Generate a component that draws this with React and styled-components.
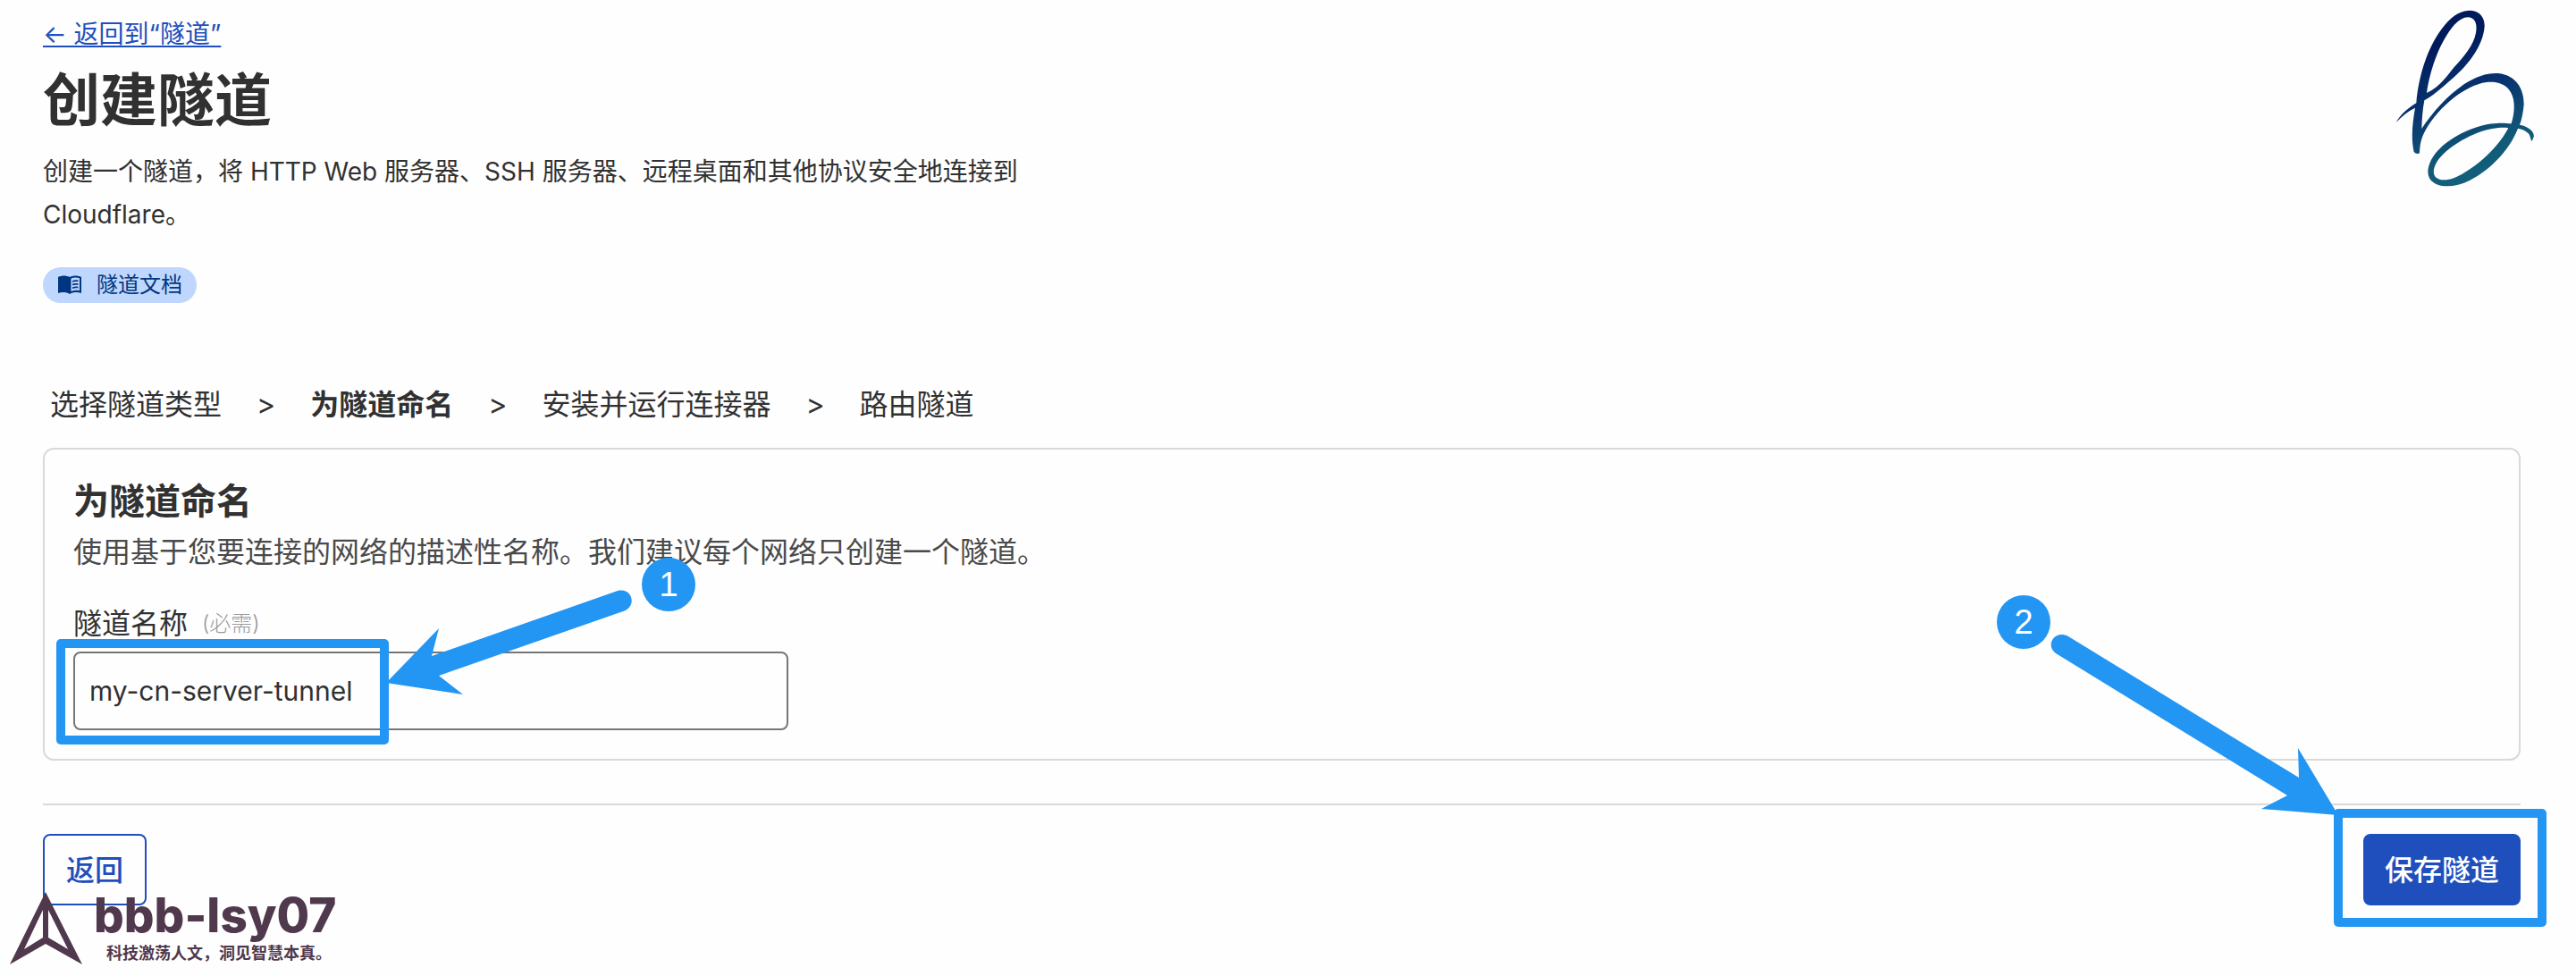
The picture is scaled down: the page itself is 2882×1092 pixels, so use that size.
import React from "react";
import styled, { createGlobalStyle } from "styled-components";

const color = {
  blue: "#1f4fbc",
  mark: "#2396f4",
  text: "#313131",
  muted: "#4a4a4a",
  line: "#d9d9d9",
  plum: "#50384d",
};

const GlobalStyle = createGlobalStyle`
  *, *::before, *::after { box-sizing: border-box; }
  body { margin: 0; background: #fefefe; }
  body, button, input {
    font-family: Inter, "Noto Sans CJK SC", sans-serif;
  }
  h1, h2, p, ol { margin: 0; padding: 0; }
`;

const Page = styled.div`
  position: relative;
  min-height: 100vh;
  padding: 18px 62px 79px 48px;
  color: ${color.text};
  font-size: 32px;
  line-height: 48px;
`;

const BackLink = styled.a`
  display: block;
  width: max-content;
  font-size: 28px;
  line-height: 40px;
  color: ${color.blue};
  text-decoration: underline;
  text-decoration-thickness: 2px;
  text-underline-offset: 3px;
`;

const Title = styled.h1`
  margin-top: 14px;
  font-size: 64px;
  line-height: 80px;
  font-weight: 600;
`;

const Intro = styled.p`
  max-width: 1100px;
  margin-top: 16px;
  font-size: 28px;
`;

const DocsLink = styled.a`
  display: flex;
  align-items: center;
  gap: 16px;
  width: max-content;
  height: 40px;
  margin-top: 35px;
  padding: 0 16px;
  border-radius: 20px;
  background: #bfd6fd;
  color: #003681;
  font-size: 24px;
  text-decoration: none;
`;

const Steps = styled.ol`
  display: flex;
  gap: 39px;
  margin-top: 90px;
  padding-left: 8px;
  list-style: none;
`;

const Step = styled.li`
  display: flex;
  gap: 39px;
  font-weight: ${(p) => (p.$current ? 600 : 400)};

  &:not(:first-child)::before {
    content: ">";
    font-weight: 400;
  }
`;

const Card = styled.section`
  margin-top: 24px;
  padding: 34px 32px 32px;
  border: 2px solid ${color.line};
  border-radius: 12px;
`;

const CardTitle = styled.h2`
  font-size: 40px;
  line-height: 48px;
  font-weight: 600;
`;

const CardText = styled.p`
  margin-top: 9px;
  color: ${color.muted};
`;

const FieldLabel = styled.label`
  display: flex;
  align-items: center;
  gap: 16px;
  margin-top: 32px;
`;

const Required = styled.span`
  font-size: 24px;
  font-weight: 300;
  color: #999;
`;

const Field = styled.div`
  position: relative;
  width: 100%;
  max-width: 800px;
  margin-top: 7px;
`;

const TextInput = styled.input`
  display: block;
  width: 100%;
  height: 88px;
  padding: 0 16px;
  border: 2px solid #767676;
  border-radius: 8px;
  background: transparent;
  color: ${color.text};
  font-size: 30px;
  outline: none;
`;

const Actions = styled.footer`
  display: flex;
  justify-content: space-between;
  margin-top: 48px;
  padding-top: 32px;
  border-top: 2px solid ${color.line};
`;

const ActionSlot = styled.div`
  position: relative;
`;

const Button = styled.button`
  display: block;
  height: 80px;
  padding: 0 ${(p) => (p.$primary ? 22 : 24)}px 4px;
  border: 2px solid ${color.blue};
  border-radius: 8px;
  background: ${(p) => (p.$primary ? color.blue : "transparent")};
  color: ${(p) => (p.$primary ? "#fff" : color.blue)};
  font-size: 32px;
  font-weight: 500;
`;

const Highlight = styled.div`
  position: absolute;
  border: 10px solid ${color.mark};
  border-radius: 5px;
  pointer-events: none;
`;

const NameHighlight = styled(Highlight)`
  top: -14px;
  left: -19px;
  width: 372px;
  height: 118px;
`;

const SaveHighlight = styled(Highlight)`
  top: -28px;
  left: -33px;
  width: 238px;
  height: 132px;
`;

const Arrow = styled.svg`
  position: absolute;
  overflow: visible;
  fill: ${color.mark};
  pointer-events: none;
`;

const NameArrow = styled(Arrow)`
  left: 350px;
  top: -69px;
`;

const SaveArrow = styled(Arrow)`
  left: -348px;
  top: -223px;
`;

const Marker = styled.span`
  position: absolute;
  display: grid;
  place-items: center;
  width: 60px;
  height: 60px;
  border-radius: 50%;
  background: ${color.mark};
  color: #fff;
  font-family: "Liberation Sans", Arial, sans-serif;
  font-size: 38px;
`;

const NameMarker = styled(Marker)`
  left: 636px;
  top: -105px;
`;

const SaveMarker = styled(Marker)`
  left: -410px;
  top: -267px;
`;

const ScriptLogo = styled.svg`
  position: absolute;
  top: 0;
  right: 0;
`;

const Watermark = styled.div`
  position: absolute;
  left: 11px;
  bottom: 12px;
  display: flex;
  align-items: flex-end;
  gap: 12px;
  color: ${color.plum};
  pointer-events: none;
`;

const WatermarkName = styled.div`
  font-size: 53px;
  line-height: 60px;
  font-weight: 800;
`;

const WatermarkMotto = styled.div`
  padding-left: 14px;
  font-size: 18px;
  line-height: 26px;
  font-weight: 700;
`;

const STEPS = ["选择隧道类型", "为隧道命名", "安装并运行连接器", "路由隧道"];

function BookIcon() {
  return (
    <svg width="28" height="22" viewBox="0 0 28 22" aria-hidden="true">
      <path
        fill="currentColor"
        fillRule="evenodd"
        d="M1 2C5 0 10 0 14 2C18 0 23 0 27 2V20C23 18.500 18 18.500 14 21C10 18.500 5 18.500 1 20ZM15.500 3.500V18C18.500 16.800 22 16.500 25 17.300V3.300C22 2.300 18.500 2.300 15.500 3.500ZM17 6C19.500 5.200 21.500 5.200 23.500 5.600V7.300C21.500 6.900 19.500 6.900 17 7.700ZM17 9.600C19.500 8.800 21.500 8.800 23.500 9.200V10.900C21.500 10.500 19.500 10.500 17 11.300ZM17 13.200C19.500 12.400 21.500 12.400 23.500 12.800V14.500C21.500 14.100 19.500 14.100 17 14.900Z"
      />
    </svg>
  );
}

function Logo() {
  return (
    <ScriptLogo width="242" height="230" viewBox="0 0 726 690" aria-hidden="true">
      <defs>
        <linearGradient id="ink" gradientUnits="userSpaceOnUse" x1="250" y1="150" x2="420" y2="600">
          <stop offset="0" stopColor="#001a5c" />
          <stop offset="0.400" stopColor="#08346f" />
          <stop offset="0.800" stopColor="#115a78" />
          <stop offset="1" stopColor="#14607c" />
        </linearGradient>
      </defs>
      <path
        fill="url(#ink)"
        fillRule="evenodd"
        d="M201 514Q190 519 182 510C171 460 178 410 186 362C163 372 143 389 122 411C137 385 160 364 190 346C197 255 230 150 285 85C315 47 345 35 372 35C402 37 420 58 419 88C415 150 370 213 310 265C272 299 240 325 217 337C211 370 209 400 208 432C245 377 290 325 350 283C395 254 430 244 465 246C527 253 552 300 551 352C548 380 544 402 537 419C570 425 588 445 584 460L578 474C573 470 574 455 565 447C555 437 545 434 531 431C505 500 440 570 370 605C330 625 290 630 262 620C228 607 223 578 235 548C262 480 360 430 430 417C465 411 490 413 509 415C520 380 520 350 515 330C505 288 470 271 425 276C355 286 268 355 222 435C206 463 202 485 201 514ZM225 312C272 290 300 245 318 224C350 190 383 150 390 110C395 80 388 61 366 58C350 57 332 65 308 95C265 150 235 240 225 312ZM499 430C482 427 460 429 430 435C370 450 290 495 258 545C243 572 245 595 268 602C290 608 320 600 352 579C415 542 470 485 499 430Z"
      />
    </ScriptLogo>
  );
}

export default function App() {
  return (
    <Page>
      <GlobalStyle />
      <Logo />
      <BackLink href="#tunnels">← 返回到“隧道”</BackLink>
      <Title>创建隧道</Title>
      <Intro>
        创建一个隧道，将 HTTP Web 服务器、SSH 服务器、远程桌面和其他协议安全地连接到 Cloudflare。
      </Intro>
      <DocsLink href="#docs">
        <BookIcon />
        隧道文档
      </DocsLink>

      <Steps>
        {STEPS.map((name, i) => (
          <Step key={name} $current={i === 1}>
            {name}
          </Step>
        ))}
      </Steps>

      <Card>
        <CardTitle>为隧道命名</CardTitle>
        <CardText>使用基于您要连接的网络的描述性名称。我们建议每个网络只创建一个隧道。</CardText>
        <FieldLabel htmlFor="tunnel-name">
          隧道名称 <Required>(必需)</Required>
        </FieldLabel>
        <Field>
          <TextInput id="tunnel-name" type="text" defaultValue="my-cn-server-tunnel" />
          <NameHighlight />
          <NameArrow width="272" height="118" viewBox="0 0 272 118">
            <path d="M0 104L59 43L51 74L259 1C276 -3 281 19 265 24L59 96L86 117Z" />
          </NameArrow>
          <NameMarker>1</NameMarker>
        </Field>
      </Card>

      <Actions>
        <Button type="button">返回</Button>
        <ActionSlot>
          <Button type="button" $primary>
            保存隧道
          </Button>
          <SaveHighlight />
          <SaveArrow width="320" height="203" viewBox="0 0 320 203">
            <path d="M320 202L275 127L276 160L18 2C2 -6 -8 13 4 21L263 180L234 195Z" />
          </SaveArrow>
          <SaveMarker>2</SaveMarker>
        </ActionSlot>
      </Actions>

      <Watermark>
        <svg width="82" height="82" viewBox="0 0 82 82" aria-hidden="true">
          <path
            fill="currentColor"
            fillRule="evenodd"
            d="M40 0L81 81L40 58L0 81ZM37 20L16 64L37 51ZM43 20V51L65 64Z"
          />
        </svg>
        <div>
          <WatermarkName>bbb-lsy07</WatermarkName>
          <WatermarkMotto>科技激荡人文，洞见智慧本真。</WatermarkMotto>
        </div>
      </Watermark>
    </Page>
  );
}
